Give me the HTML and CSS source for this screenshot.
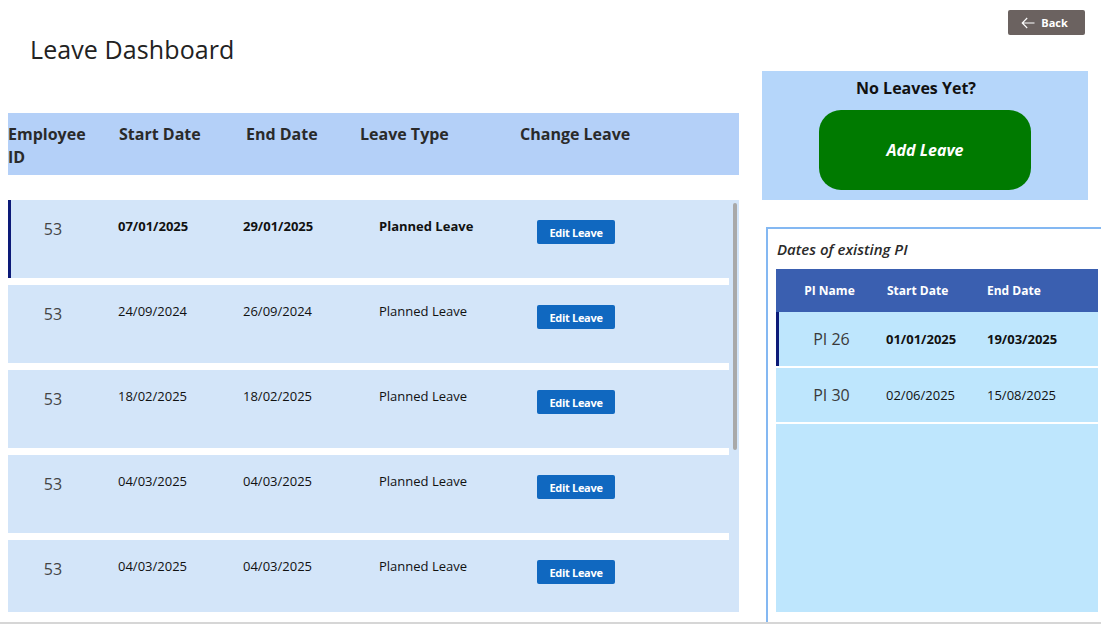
FILE: index.html
```html
<!DOCTYPE html>
<html>
<head>
<meta charset="utf-8">
<link rel="stylesheet" href="styles.css">
</head>
<body>
<div class="page">
  <main class="left">
    <div class="title-bar"><h1 class="title">Leave Dashboard</h1></div>
    <div class="list-head">
      <div class="hcell hc-emp">Employee ID</div>
      <div class="hcell">Start Date</div>
      <div class="hcell">End Date</div>
      <div class="hcell">Leave Type</div>
      <div class="hcell">Change Leave</div>
    </div>
    <div class="gallery">
      <div class="row selected">
        <div class="cell c-id">53</div>
        <div class="cell c-date">07/01/2025</div>
        <div class="cell c-date">29/01/2025</div>
        <div class="cell c-type">Planned Leave</div>
        <div class="cell"><button class="edit-btn">Edit Leave</button></div>
      </div>
      <div class="row">
        <div class="cell c-id">53</div>
        <div class="cell c-date">24/09/2024</div>
        <div class="cell c-date">26/09/2024</div>
        <div class="cell c-type">Planned Leave</div>
        <div class="cell"><button class="edit-btn">Edit Leave</button></div>
      </div>
      <div class="row">
        <div class="cell c-id">53</div>
        <div class="cell c-date">18/02/2025</div>
        <div class="cell c-date">18/02/2025</div>
        <div class="cell c-type">Planned Leave</div>
        <div class="cell"><button class="edit-btn">Edit Leave</button></div>
      </div>
      <div class="row">
        <div class="cell c-id">53</div>
        <div class="cell c-date">04/03/2025</div>
        <div class="cell c-date">04/03/2025</div>
        <div class="cell c-type">Planned Leave</div>
        <div class="cell"><button class="edit-btn">Edit Leave</button></div>
      </div>
      <div class="row">
        <div class="cell c-id">53</div>
        <div class="cell c-date">04/03/2025</div>
        <div class="cell c-date">04/03/2025</div>
        <div class="cell c-type">Planned Leave</div>
        <div class="cell"><button class="edit-btn">Edit Leave</button></div>
      </div>
      <div class="scrollbar"></div>
    </div>
  </main>
  <aside class="right">
    <button class="back-btn">
      <svg class="back-icon" width="14" height="12" viewBox="0 0 14 12"><path d="M13.5 6H1.2M6.2 1L1.2 6l5 5" fill="none" stroke="#fff" stroke-width="1.1"/></svg>
      <span>Back</span>
    </button>
    <section class="add-panel">
      <div class="add-title">No Leaves Yet?</div>
      <button class="add-btn">Add Leave</button>
    </section>
    <section class="pi-panel">
      <div class="pi-caption">Dates of existing PI</div>
      <div class="pi-table">
        <div class="pi-head">
          <div class="pi-c1">PI Name</div>
          <div class="pi-c2">Start Date</div>
          <div class="pi-c3">End Date</div>
        </div>
        <div class="pi-row selected">
          <div class="pi-c1 pi-name">PI 26</div>
          <div class="pi-c2 pi-date bold">01/01/2025</div>
          <div class="pi-c3 pi-date bold">19/03/2025</div>
        </div>
        <div class="pi-row">
          <div class="pi-c1 pi-name">PI 30</div>
          <div class="pi-c2 pi-date">02/06/2025</div>
          <div class="pi-c3 pi-date">15/08/2025</div>
        </div>
        <div class="pi-fill"></div>
      </div>
    </section>
  </aside>
</div>
</body>
</html>
```
FILE: styles.css
```css
* { box-sizing: border-box; }
html, body { margin: 0; padding: 0; background: #fff; }
body {
  font-family: "Open Sans", "Noto Sans", sans-serif;
  color: #222;
  width: 1101px;
  height: 624px;
  overflow: hidden;
}
button { font-family: inherit; border: 0; padding: 0; cursor: pointer; }

.page {
  display: grid;
  grid-template-columns: 731px 1fr;
  column-gap: 23px;
  padding-left: 8px;
  height: 624px;
  border-bottom: 2px solid #d6d6d6;
}

/* ---------- left ---------- */
.left { display: flex; flex-direction: column; }
.title-bar { height: 113px; padding: 31px 0 0 22px; }
.title {
  margin: 0;
  font-size: 25px;
  font-weight: 400;
  letter-spacing: 0.1px;
  line-height: 36px;
  color: #222;
}
.list-head {
  height: 62px;
  background: #b4d0f8;
  display: grid;
  grid-template-columns: 111px 127px 114px 160px 1fr;
  padding-top: 10px;
  margin-bottom: 25px;
}
.hcell {
  font-size: 16px;
  font-weight: 700;
  line-height: 23px;
  color: #2a2a2a;
}
.hc-emp { width: 90px; }

.gallery {
  position: relative;
  height: 412px;
  background: #d3e5f9;
  overflow: hidden;
}
.row {
  width: 721px;
  height: 85px;
  border-bottom: 7px solid #fff;
  display: grid;
  grid-template-columns: 110px 125px 136px 158px 1fr;
  align-items: start;
}
.row.selected { box-shadow: inset 3px 0 0 #0c1a78; }
.cell { font-size: 13px; line-height: 18px; color: #111; padding-top: 17px; }
.c-id {
  width: 90px;
  text-align: center;
  font-size: 16px;
  color: #444;
  padding-top: 20px;
}
.row.selected .c-date, .row.selected .c-type { font-weight: 700; }
.edit-btn {
  margin-top: 3px;
  width: 78px;
  height: 24px;
  border-radius: 2px;
  background: #1068c0;
  color: #fff;
  font-size: 11px;
  font-weight: 700;
  letter-spacing: -0.3px;
}
.scrollbar {
  position: absolute;
  left: 725px;
  top: 3px;
  width: 4px;
  height: 247px;
  border-radius: 2px;
  background: #a9a9a9;
}

/* ---------- right ---------- */
.right { display: flex; flex-direction: column; }
.back-btn {
  align-self: flex-end;
  margin: 10px 17px 0 0;
  width: 77px;
  height: 25px;
  border-radius: 2px;
  background: #6b6260;
  color: #fff;
  font-size: 11px;
  font-weight: 700;
  display: flex;
  align-items: center;
  justify-content: center;
  gap: 6px;
  padding-right: 4px;
}
.back-icon { display: block; }

.add-panel {
  margin-top: 36px;
  width: 326px;
  height: 129px;
  background: #b5d6fa;
  display: flex;
  flex-direction: column;
  align-items: center;
}
.add-title {
  margin-top: 6px;
  padding-right: 18px;
  font-size: 16px;
  font-weight: 700;
  line-height: 22px;
  color: #111;
}
.add-btn {
  margin-top: 11px;
  width: 212px;
  height: 80px;
  border-radius: 22px;
  background: #007a00;
  color: #fff;
  font-size: 16px;
  font-weight: 700;
  font-style: italic;
}

.pi-panel {
  margin: 27px 0 0 4px;
  flex: 1;
  border-left: 2px solid #84b8f2;
  border-top: 2px solid #84b8f2;
  padding: 10px 4px 10px 8px;
  display: flex;
  flex-direction: column;
}
.pi-caption {
  font-size: 15px;
  font-style: italic;
  font-weight: 600;
  line-height: 20px;
  color: #2a2a2a;
  padding-left: 1px;
  margin-bottom: 10px;
}
.pi-table { flex: 1; display: flex; flex-direction: column; width: 322px; }
.pi-head, .pi-row {
  display: grid;
  grid-template-columns: 111px 101px 1fr;
  align-items: center;
}
.pi-head {
  height: 43px;
  background: #3a5fb0;
  color: #fff;
  font-size: 12px;
  font-weight: 700;
}
.pi-head .pi-c1 { text-align: center; padding-right: 4px; }
.pi-head .pi-c3 { margin-left: -1px; }
.pi-row {
  height: 56px;
  background: #bee6fd;
  border-bottom: 2px solid #fff;
}
.pi-row.selected { box-shadow: inset 3px 0 0 #0c1a78; }
.pi-name { text-align: center; font-size: 16px; color: #3a3a3a; padding-left: 0; }
.pi-date { font-size: 13px; color: #111; margin-left: -1px; }
.pi-date.bold { font-weight: 700; }
.pi-fill { flex: 1; background: #bee6fd; }
```
